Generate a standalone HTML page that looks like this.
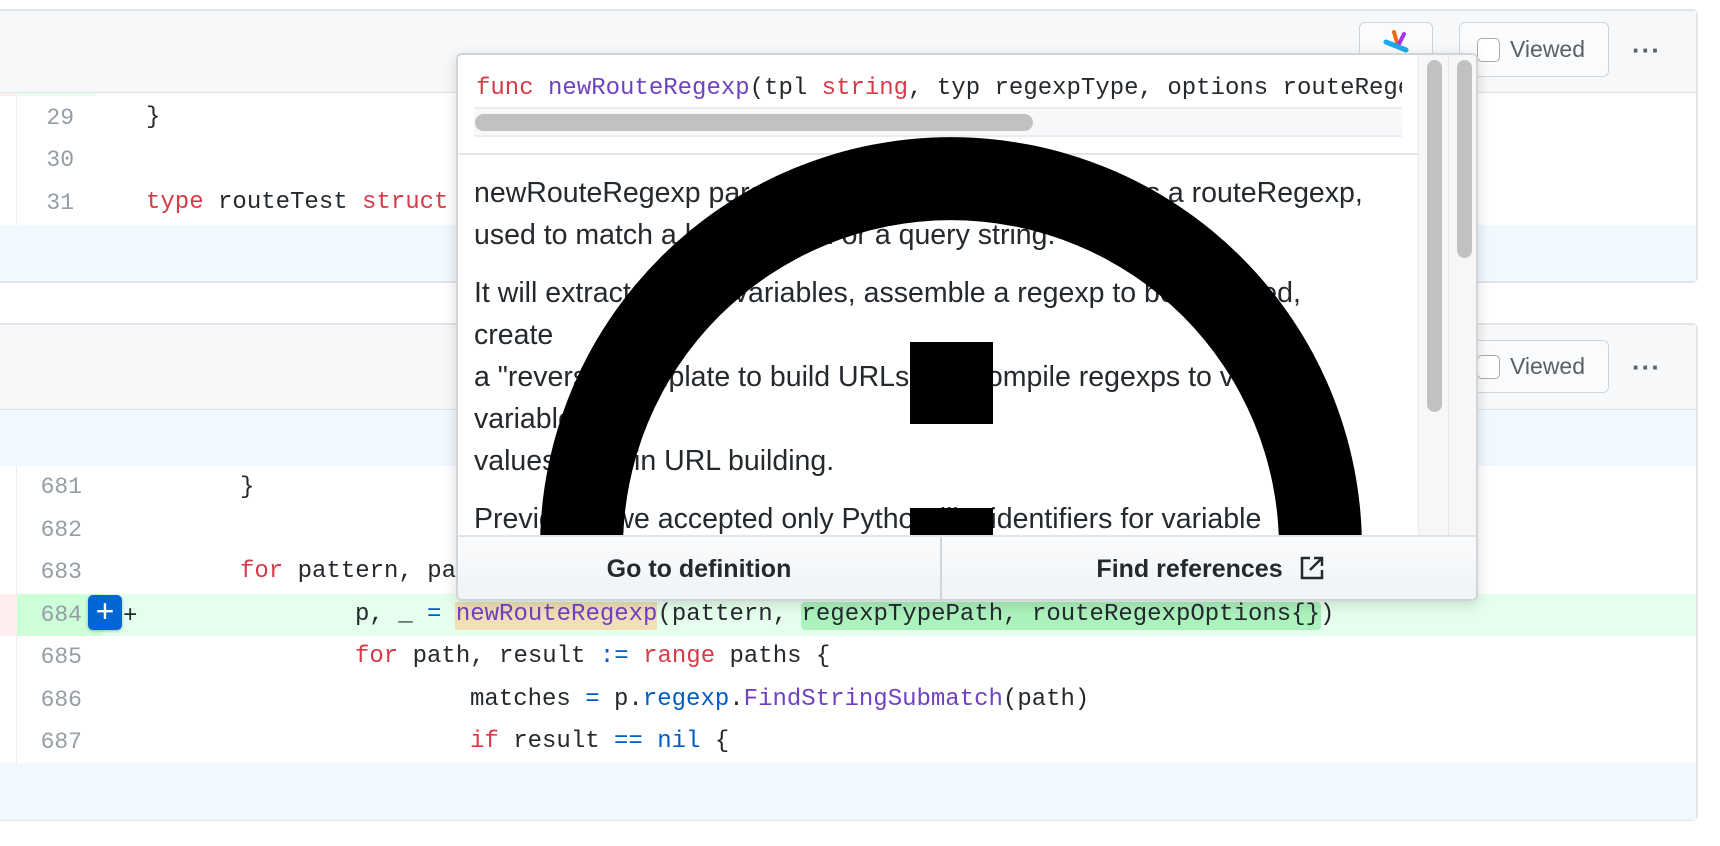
<!DOCTYPE html>
<html><head><meta charset="utf-8"><style>
*{margin:0;padding:0;box-sizing:border-box}
body{width:1720px;height:846px;background:#fff;position:relative;overflow:hidden;font-family:"Liberation Sans",sans-serif;color:#24292e}
.a{position:absolute}
.mono{font-family:"Liberation Mono",monospace;font-size:24px;white-space:pre}
.ln{position:absolute;color:#959da5;font-family:"Liberation Mono",monospace;font-size:23px;text-align:right;width:60px;line-height:30px}
.code{position:absolute;line-height:30px;font-family:"Liberation Mono",monospace;font-size:24px;white-space:pre}
.k{color:#d73a49}.f{color:#6f42c1}.b{color:#005cc5}
.btn{position:absolute;border:1px solid #d1d5da;border-radius:6px;background:#fafbfc}
.vw{font-size:23px;color:#586069}
.cb{position:absolute;width:23px;height:24px;border:1px solid #aaa;border-radius:5px;background:#fff}
.dots{position:absolute;font-size:26px;color:#586069;font-weight:bold;letter-spacing:1px}
.txt{position:absolute;left:474px;font-size:28.5px;line-height:42px;white-space:nowrap;color:#24292e}
</style></head><body>
<!-- file 1 -->
<div class="a" style="left:0;top:9px;width:1698px;height:274px;border-top:2px solid #e1e4e8;border-right:2px solid #e1e4e8;border-bottom:2px solid #e1e4e8;border-radius:0 6px 6px 0"></div>
<div class="a" style="left:0;top:11px;width:1696px;height:82px;background:#f6f8fa;border-bottom:1px solid #e1e4e8"></div>
<div class="a" style="left:0;top:93px;width:17px;height:3px;background:#ffeef0"></div>
<div class="a" style="left:17px;top:93px;width:78px;height:3px;background:#e6ffed"></div>
<div class="a" style="left:16px;top:96px;width:1px;height:129px;background:#eaecef"></div>
<div class="ln" style="left:14px;top:103px">29</div>
<div class="ln" style="left:14px;top:145px">30</div>
<div class="ln" style="left:14px;top:188px">31</div>
<div class="code" style="left:146px;top:103px">}</div>
<div class="code" style="left:146px;top:188px"><span class="k">type</span> routeTest <span class="k">struct</span> {</div>
<div class="a" style="left:0;top:225px;width:1696px;height:56px;background:#f1f8ff"></div>
<!-- header 1 buttons -->
<div class="btn" style="left:1359px;top:22px;width:74px;height:50px"></div>
<svg class="a" style="left:1380px;top:30px" width="32" height="24"><line x1="14" y1="2" x2="18" y2="16" stroke="#f66a0a" stroke-width="4" stroke-linecap="round"/><line x1="24" y1="4" x2="18" y2="16" stroke="#a333f0" stroke-width="4" stroke-linecap="round"/><line x1="6" y1="12" x2="26" y2="20" stroke="#1fa8e8" stroke-width="5" stroke-linecap="round"/></svg>
<div class="btn" style="left:1459px;top:22px;width:150px;height:55px"></div>
<div class="cb" style="left:1477px;top:38px"></div>
<div class="a vw" style="left:1510px;top:36px">Viewed</div>
<div class="dots" style="left:1632px;top:35px">···</div>
<!-- file 2 -->
<div class="a" style="left:0;top:323px;width:1698px;height:498px;border-top:2px solid #e1e4e8;border-right:2px solid #e1e4e8;border-bottom:2px solid #e1e4e8;border-radius:0 6px 6px 0"></div>
<div class="a" style="left:0;top:325px;width:1696px;height:85px;background:#f6f8fa;border-bottom:1px solid #e1e4e8"></div>
<div class="btn" style="left:1459px;top:340px;width:150px;height:53px"></div>
<div class="cb" style="left:1477px;top:355px"></div>
<div class="a vw" style="left:1510px;top:353px">Viewed</div>
<div class="dots" style="left:1632px;top:352px">···</div>
<div class="a" style="left:0;top:410px;width:1696px;height:56px;background:#f1f8ff"></div>
<div class="a" style="left:16px;top:466px;width:1px;height:297px;background:#eaecef"></div>
<div class="a" style="left:0;top:594px;width:17px;height:42px;background:#ffeef0"></div>
<div class="a" style="left:17px;top:594px;width:1679px;height:42px;background:#e6ffed"></div>
<div class="a" style="left:17px;top:594px;width:86px;height:42px;background:#cdffd8"></div>
<div class="ln" style="left:22px;top:472px">681</div>
<div class="ln" style="left:22px;top:515px">682</div>
<div class="ln" style="left:22px;top:557px">683</div>
<div class="ln" style="left:22px;top:600px">684</div>
<div class="ln" style="left:22px;top:642px">685</div>
<div class="ln" style="left:22px;top:685px">686</div>
<div class="ln" style="left:22px;top:727px">687</div>
<div class="a" style="left:88px;top:595px;width:34px;height:35px;background:#0366d6;border-radius:5px;color:#fff;font-size:32px;line-height:33px;text-align:center;box-shadow:0 1px 3px rgba(0,0,0,.3)">+</div>
<div class="code" style="left:123px;top:602px">+</div>
<div class="a" style="left:455px;top:602px;width:202px;height:28px;background:#f2dfb8"></div>
<div class="a" style="left:801px;top:602px;width:520px;height:28px;background:#acf2bd;border-radius:4px"></div>
<div class="code" style="left:240px;top:473px">}</div>
<div class="code" style="left:240px;top:557px"><span class="k">for</span> pattern, paths := <span class="k">range</span> tests {</div>
<div class="code" style="left:355px;top:600px">p, _ <span class="b">=</span> <span class="f">newRouteRegexp</span>(pattern, regexpTypePath, routeRegexpOptions{})</div>
<div class="code" style="left:355px;top:642px"><span class="k">for</span> path, result <span class="b">:=</span> <span class="k">range</span> paths {</div>
<div class="code" style="left:470px;top:685px">matches <span class="b">=</span> p.<span class="b">regexp</span>.<span class="f">FindStringSubmatch</span>(path)</div>
<div class="code" style="left:470px;top:727px"><span class="k">if</span> result <span class="b">==</span> <span class="b">nil</span> {</div>
<div class="a" style="left:0;top:763px;width:1696px;height:57px;background:#f1f8ff"></div>
<!-- popup -->
<div class="a" style="left:456px;top:53px;width:1022px;height:548px;background:#fff;border:2px solid #d1d5da;border-radius:6px;box-shadow:0 4px 14px rgba(0,0,0,.15);overflow:hidden">
 <div class="a" style="left:0;top:98px;width:1020px;height:2px;background:#e1e4e8"></div>
 <div class="a" style="left:16px;top:52px;width:928px;height:30px;background:#f6f8fa;border-top:2px solid #eaecef;border-bottom:2px solid #eaecef"></div>
 <div class="a" style="left:17px;top:59px;width:558px;height:17px;background:#c1c1c1;border-radius:9px"></div>
 <div class="a mono" style="left:18px;top:18px;width:926px;overflow:hidden;line-height:32px;font-size:24px"><span class="k">func</span> <span class="f">newRouteRegexp</span>(tpl <span class="k">string</span>, typ regexpType, options routeRegexpOptions) (*routeRegexp, error)</div>
 <div class="a" style="left:960px;top:0;width:60px;height:480px;background:#f7f7f7;border-left:1px solid #eaeaea"></div>
 <div class="a" style="left:990px;top:0;width:1px;height:480px;background:#e4e4e4"></div>
 <div class="a" style="left:969px;top:5px;width:15px;height:352px;background:#c1c1c1;border-radius:8px"></div>
 <div class="a" style="left:999px;top:5px;width:15px;height:198px;background:#c1c1c1;border-radius:8px"></div>
 <div class="a" style="left:0;top:480px;width:1020px;height:66px;background:linear-gradient(#fafbfc,#eff3f6);border-top:2px solid #e1e4e8"></div>
 <div class="a" style="left:482px;top:482px;width:2px;height:64px;background:#d1d5da"></div>
 <div class="a" style="left:0;top:494px;width:482px;text-align:center;font-size:25px;font-weight:bold;line-height:40px">Go to definition</div>
 <div class="a" style="left:484px;top:494px;width:536px;text-align:center;font-size:25px;font-weight:bold;line-height:40px">Find references <svg width="24" height="24" viewBox="0 0 24 24" style="vertical-align:-3px;margin-left:10px"><path d="M10 2H2v20h20v-8M14 2h8v8M22 2L10 14" fill="none" stroke="#24292e" stroke-width="2.5"/></svg></div>
</div>
<div class="txt" style="top:172px">newRouteRegexp parses a route template and returns a routeRegexp,</div>
<div class="txt" style="top:214px">used to match a host, a path or a query string.</div>
<div class="txt" style="top:272px">It will extract named variables, assemble a regexp to be matched,</div>
<div class="txt" style="top:314px">create</div>
<div class="txt" style="top:356px">a "reverse" template to build URLs and compile regexps to validate</div>
<div class="txt" style="top:398px">variable</div>
<div class="txt" style="top:440px">values used in URL building.</div>
<div class="txt" style="top:498px;height:37px;overflow:hidden">Previously we accepted only Python-like identifiers for variable</div>
<!-- black overlay -->
<svg class="a" style="left:0;top:0" width="1720" height="535"><path d="M540 548A411 411 0 0 1 1362 548L1279 548A328 328 0 0 0 623 548Z" fill="#000"/><rect x="910" y="342" width="83" height="82" fill="#000"/><rect x="910" y="508" width="83" height="30" fill="#000"/></svg>
</body></html>
